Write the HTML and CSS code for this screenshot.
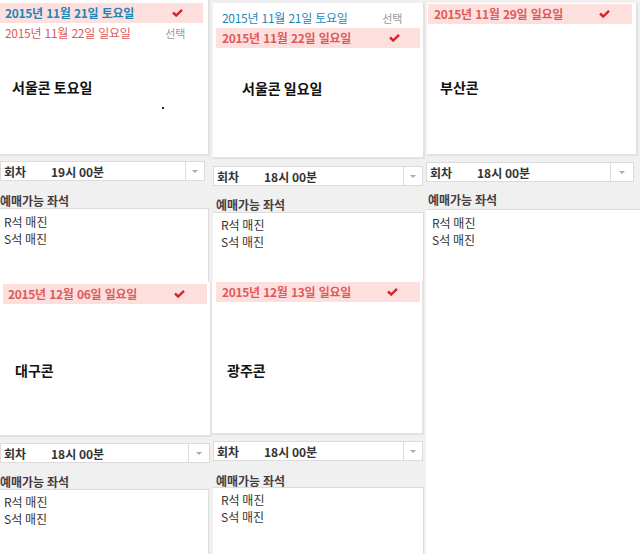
FILE: index.html
```html
<!DOCTYPE html>
<html>
<head>
    <title>공연 회차 선택</title>
    <link rel="stylesheet" href="styles.css">
</head>
<body>
    <div class="board">
        <!-- 1열 -->
        <div class="col col-1">
            <div class="show show-a">
                <ul class="dates">
                    <li class="date on blue">2015년 11월 21일 토요일
                        <svg class="check" width="11" height="8" viewBox="0 0 11 8"><path d="M1 3.5 L4.2 6.5 L10 0.8" fill="none" stroke="#d4262c" stroke-width="2.4"/></svg>
                    </li>
                    <li class="date red">2015년 11월 22일 일요일 <span class="pick">선택</span></li>
                </ul>
                <h2 class="title">서울콘 토요일</h2>
                <span class="dot"></span>
            </div>
            <div class="round">
                <span class="round-label">회차</span><span class="round-time">19시 00분</span>
                <span class="arrow"></span>
            </div>
            <div class="seat-head">예매가능 좌석</div>
            <div class="seats">
                <p>R석 매진</p>
                <p>S석 매진</p>
            </div>
            <div class="show show-b">
                <ul class="dates">
                    <li class="date on red">2015년 12월 06일 일요일
                        <svg class="check" width="11" height="8" viewBox="0 0 11 8"><path d="M1 3.5 L4.2 6.5 L10 0.8" fill="none" stroke="#d4262c" stroke-width="2.4"/></svg>
                    </li>
                </ul>
                <h2 class="title">대구콘</h2>
            </div>
            <div class="round">
                <span class="round-label">회차</span><span class="round-time">18시 00분</span>
                <span class="arrow"></span>
            </div>
            <div class="seat-head">예매가능 좌석</div>
            <div class="seats last">
                <p>R석 매진</p>
                <p>S석 매진</p>
            </div>
        </div>

        <!-- 2열 -->
        <div class="col col-2">
            <div class="show show-a">
                <ul class="dates">
                    <li class="date blue">2015년 11월 21일 토요일 <span class="pick">선택</span></li>
                    <li class="date on red">2015년 11월 22일 일요일
                        <svg class="check" width="11" height="8" viewBox="0 0 11 8"><path d="M1 3.5 L4.2 6.5 L10 0.8" fill="none" stroke="#d4262c" stroke-width="2.4"/></svg>
                    </li>
                </ul>
                <h2 class="title">서울콘 일요일</h2>
            </div>
            <div class="round">
                <span class="round-label">회차</span><span class="round-time">18시 00분</span>
                <span class="arrow"></span>
            </div>
            <div class="seat-head">예매가능 좌석</div>
            <div class="seats">
                <p>R석 매진</p>
                <p>S석 매진</p>
            </div>
            <div class="show show-b">
                <ul class="dates">
                    <li class="date on red">2015년 12월 13일 일요일
                        <svg class="check" width="11" height="8" viewBox="0 0 11 8"><path d="M1 3.5 L4.2 6.5 L10 0.8" fill="none" stroke="#d4262c" stroke-width="2.4"/></svg>
                    </li>
                </ul>
                <h2 class="title">광주콘</h2>
            </div>
            <div class="round">
                <span class="round-label">회차</span><span class="round-time">18시 00분</span>
                <span class="arrow"></span>
            </div>
            <div class="seat-head">예매가능 좌석</div>
            <div class="seats last">
                <p>R석 매진</p>
                <p>S석 매진</p>
            </div>
        </div>

        <!-- 3열 -->
        <div class="col col-3">
            <div class="show show-a">
                <ul class="dates">
                    <li class="date on red">2015년 11월 29일 일요일
                        <svg class="check" width="11" height="8" viewBox="0 0 11 8"><path d="M1 3.5 L4.2 6.5 L10 0.8" fill="none" stroke="#d4262c" stroke-width="2.4"/></svg>
                    </li>
                </ul>
                <h2 class="title">부산콘</h2>
            </div>
            <div class="round">
                <span class="round-label">회차</span><span class="round-time">18시 00분</span>
                <span class="arrow"></span>
            </div>
            <div class="seat-head">예매가능 좌석</div>
            <div class="seats last">
                <p>R석 매진</p>
                <p>S석 매진</p>
            </div>
        </div>
    </div>
</body>
</html>
```

FILE: styles.css
```css
* {
    box-sizing: border-box;
}
body {
    margin: 0;
    background: #f0f0f0;
    font-family: "Noto Sans CJK KR", "Noto Sans", sans-serif;
    font-size: 12px;
    color: #333;
    height: 554px;
    overflow: hidden;
}
.board {
    display: flex;
    height: 554px;
}
.col {
    display: flex;
    flex-direction: column;
    height: 554px;
}
.col-1 {
    width: 212px;
}
.col-2 {
    width: 214px;
}
.col-3 {
    width: 214px;
}

/* 공연 카드 */
.show {
    position: relative;
    background: #fff;
    border-right: 2px solid #e2e2e2;
    border-bottom: 2px solid #e2e2e2;
    height: 156px;
    flex-shrink: 0;
}
.dates {
    list-style: none;
    margin: 0;
    padding: 0;
}
.date {
    display: flex;
    align-items: center;
    justify-content: space-between;
    height: 20px;
    line-height: 20px;
    padding: 0 20px 0 5px;
    letter-spacing: -0.3px;
    word-spacing: 1px;
}
.date.on {
    background: #fde0dd;
    font-weight: bold;
}
.date.blue {
    color: #1f86b8;
}
.date.red {
    color: #e05a5c;
}
.pick {
    color: #9a9a9a;
    font-size: 11px;
    font-weight: normal;
    margin-right: -2px;
}
.check {
    display: block;
}
.title {
    margin: 0;
    font-size: 14px;
    line-height: 20px;
    font-weight: bold;
    color: #111;
}
.dot {
    position: absolute;
    left: 162px;
    top: 107px;
    width: 2px;
    height: 2px;
    background: #222;
}

/* 회차 선택 */
.round {
    display: flex;
    align-items: center;
    height: 20px;
    background: #fff;
    border: 1px solid #dcdcdc;
    font-weight: bold;
    color: #333;
    flex-shrink: 0;
}
.round-label {
    padding-left: 3px;
    width: 50px;
}
.round-time {
    flex: 1;
}
.arrow {
    align-self: stretch;
    width: 19px;
    border-left: 1px solid #dcdcdc;
    display: flex;
    align-items: center;
    justify-content: center;
}
.arrow::after {
    content: "";
    border-left: 3px solid transparent;
    border-right: 3px solid transparent;
    border-top: 3px solid #aaa;
}

/* 좌석 */
.seat-head {
    height: 27px;
    padding-top: 12px;
    line-height: 16px;
    font-weight: bold;
    color: #4a3c3e;
    flex-shrink: 0;
}
.seats {
    background: #fff;
    border-top: 1px solid #dcdcdc;
    border-right: 1px solid #dcdcdc;
    padding: 4px 0 0 4px;
    height: 74px;
    flex-shrink: 0;
}
.seats.last {
    flex: 1;
}
.seats p {
    margin: 0;
    line-height: 17px;
}

/* 1열 */
.col-1 .show-a {
    width: 210px;
    padding-top: 3px;
}
.col-1 .show-a .date {
    width: 203px;
}
.col-1 .show-a .title {
    margin: 34px 0 0 12px;
}
.col-1 .round {
    margin-top: 5px;
    width: 205px;
}
.col-1 .seat-head {
    height: 27px;
    padding-top: 12px;
}
.col-1 .seats {
    width: 209px;
}
.col-1 .show-b {
    height: 155px;
    width: 212px;
    padding-top: 2px;
}
.col-1 .show-b .date {
    margin-left: 3px;
    width: 204px;
    padding-left: 5px;
    padding-right: 22px;
}
.col-1 .show-b .title {
    margin: 56px 0 0 15px;
}
.col-1 .show-b + .round {
    margin-top: 6px;
    width: 210px;
}
.col-1 .show-b + .round .arrow {
    width: 21px;
}
.col-1 .seats.last {
    padding-top: 3px;
}
.col-1 .show-b ~ .seat-head {
    height: 26px;
    padding-top: 11px;
}

/* 2열 */
.col-2 .show-a {
    margin: 3px 0 0 1px;
    width: 212px;
    height: 156px;
    padding-top: 5px;
}
.col-2 .show-a .date {
    margin-left: 3px;
    width: 204px;
    padding-left: 6px;
}
.col-2 .show-a .title {
    margin: 30px 0 0 29px;
}
.col-2 .round {
    margin: 7px 0 0 1px;
    width: 210px;
}
.col-2 .seat-head {
    height: 26px;
    padding: 11px 0 0 4px;
}
.col-2 .seats {
    margin-left: 1px;
    width: 211px;
    padding-left: 8px;
    height: 70px;
    padding-top: 3px;
}
.col-2 .show-b {
    width: 212px;
    height: 153px;
}
.col-2 .show-b .date {
    margin-left: 4px;
    width: 204px;
    padding-left: 6px;
    padding-right: 22px;
}
.col-2 .show-b .title {
    margin: 58px 0 0 15px;
}
.col-2 .show-b + .round {
    margin-top: 6px;
}
.col-2 .show-b ~ .seat-head {
    padding-top: 12px;
}
.col-2 .seats.last {
    padding-top: 3px;
}

/* 3열 */
.col-3 .show-a {
    margin: 3px 0 0 1px;
    width: 211px;
    height: 153px;
    padding-top: 1px;
}
.col-3 .show-a .date {
    margin-left: 1px;
    width: 204px;
    padding-left: 6px;
    padding-right: 22px;
}
.col-3 .show-a .title {
    margin: 53px 0 0 13px;
}
.col-3 .round {
    margin-top: 6px;
    width: 208px;
}
.col-3 .round .arrow {
    width: 23px;
}
.col-3 .seat-head {
    height: 27px;
    padding: 10px 0 0 2px;
}
.col-3 .seats {
    border-right: none;
    padding: 4px 0 0 6px;
}
```
